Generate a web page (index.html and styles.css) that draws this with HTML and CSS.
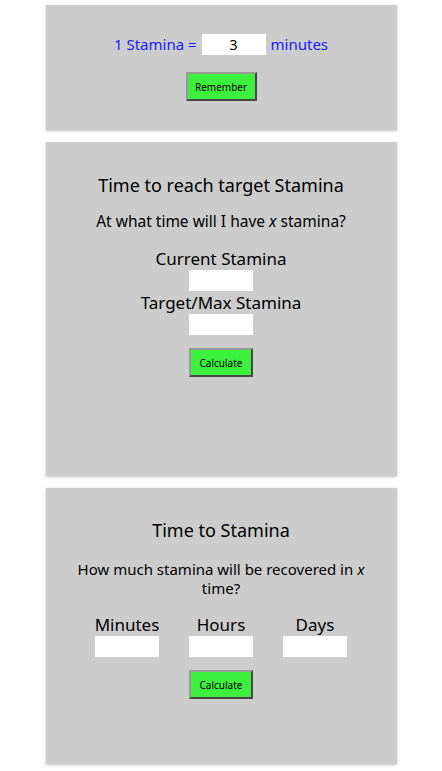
FILE: index.html
```html
<!DOCTYPE html>
<html>
<head>
	<title>Stamina</title>
	<link rel="stylesheet" href="styles.css">
</head>
<body>

<div class="tarjeta ajuste">
	<div class="fila">
		<span>1 Stamina =</span>
		<input type="text" class="campo" value="3">
		<span>minutes</span>
	</div>
	<button class="boton boton-ancho">Remember</button>
</div>

<div class="tarjeta objetivo">
	<h2>Time to reach target Stamina</h2>
	<p class="pregunta">At what time will I have <i>x</i> stamina?</p>
	<label class="etiqueta">Current Stamina</label>
	<input type="text" class="campo">
	<label class="etiqueta segunda">Target/Max Stamina</label>
	<input type="text" class="campo">
	<button class="boton">Calculate</button>
</div>

<div class="tarjeta tiempo">
	<h2>Time to Stamina</h2>
	<p class="pregunta">How much stamina will be recovered in <i>x</i> time?</p>
	<div class="columnas">
		<div class="columna">
			<label class="etiqueta">Minutes</label>
			<input type="text" class="campo">
		</div>
		<div class="columna">
			<label class="etiqueta">Hours</label>
			<input type="text" class="campo">
		</div>
		<div class="columna">
			<label class="etiqueta">Days</label>
			<input type="text" class="campo">
		</div>
	</div>
	<button class="boton">Calculate</button>
</div>

</body>
</html>
```

FILE: styles.css
```css
html, body {
	margin: 0;
	padding: 0;
}

body {
	background-color: white;
	font-family: "Noto Sans", sans-serif;
	color: black;
	padding-top: 5px;
}

div.tarjeta {
	width: 351px;
	margin: 0 auto 12px auto;
	box-sizing: border-box;
	background-color: #cccccc;
	box-shadow: 0 1px 3px rgba(0, 0, 0, 0.25);
	display: flex;
	flex-direction: column;
	align-items: center;
	text-align: center;
	padding: 0 24px;
}

div.ajuste {
	height: 125px;
	padding-top: 29px;
}

div.objetivo {
	height: 334px;
	padding-top: 33px;
}

div.tiempo {
	height: 276px;
	padding-top: 32px;
}

h2 {
	margin: 0;
	font-size: 18px;
	font-weight: normal;
	line-height: 20px;
}

p.pregunta {
	margin: 17px 0 0 0;
	font-size: 15.5px;
	line-height: 19px;
}

div.tiempo p.pregunta {
	margin-top: 20px;
	font-size: 15px;
}

.etiqueta {
	display: block;
	font-size: 17px;
	line-height: 20px;
	margin-top: 18px;
}

.etiqueta.segunda {
	margin-top: 2px;
}

input.campo {
	width: 64px;
	height: 21px;
	box-sizing: border-box;
	border: none;
	outline: none;
	background-color: white;
	margin: 1px 0 0 0;
	padding: 0;
	font-family: "Noto Sans", sans-serif;
	font-size: 14px;
	text-align: center;
}

div.fila {
	display: flex;
	align-items: center;
	gap: 5px;
	color: #1a1aff;
	font-size: 15px;
	line-height: 21px;
}

div.fila input.campo {
	margin: 0;
	color: black;
}

button.boton {
	margin-top: 13px;
	width: 64px;
	height: 29px;
	background-color: #3ef03e;
	border: 2px outset #9a9a9a;
	font-family: "Noto Sans", sans-serif;
	font-size: 10px;
	color: black;
	padding: 0;
}

button.boton-ancho {
	width: 71px;
	margin-top: 17px;
}

div.columnas {
	display: flex;
	margin-top: 17px;
}

div.columna {
	width: 94px;
	display: flex;
	flex-direction: column;
	align-items: center;
}

div.columna .etiqueta {
	margin-top: 0;
}
```
